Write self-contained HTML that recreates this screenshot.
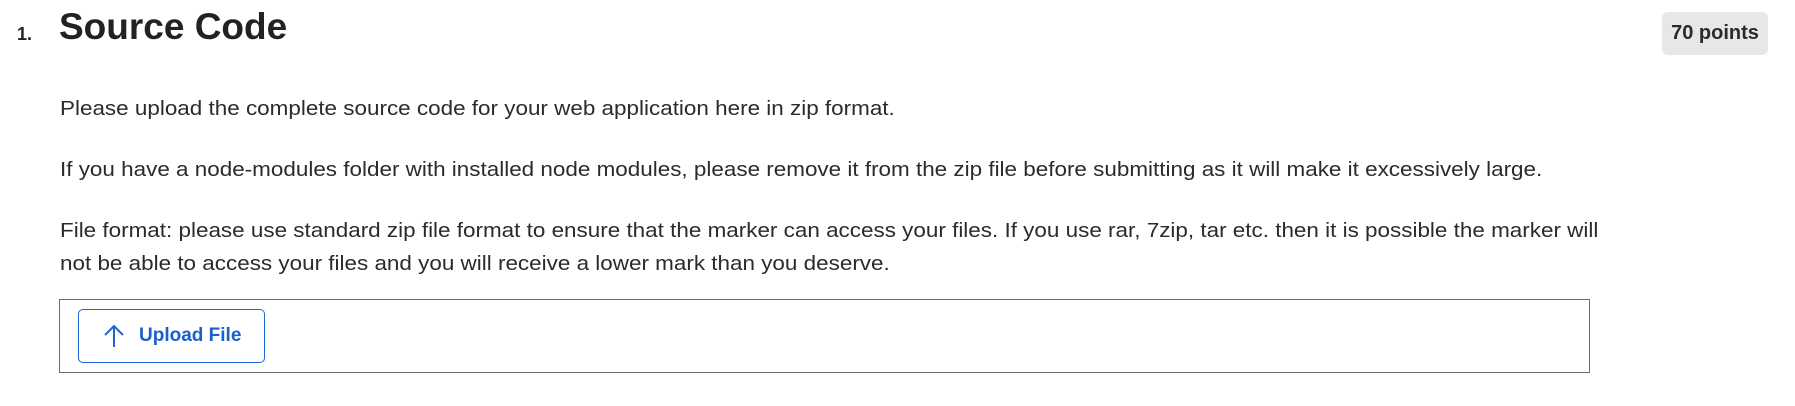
<!DOCTYPE html>
<html><head><meta charset="utf-8"><style>
body{margin:0;width:1795px;height:406px;background:#fff;position:relative;overflow:hidden;font-family:"Liberation Sans",sans-serif;color:#2d3b45}
.a{position:absolute;white-space:nowrap}
.t{font-size:20.5px;color:#2b2b2b;transform:scaleX(1.095);transform-origin:0 0}
</style></head><body>
<div class="a" style="left:17px;top:24px;font-size:18px;font-weight:bold;color:#222">1.</div>
<div class="a" style="left:59px;top:6px;font-size:37px;font-weight:bold;color:#222">Source Code</div>
<div class="a" style="left:1662px;top:12px;width:106px;height:43px;background:#e6e7e9;border-radius:6px;font-size:20px;font-weight:bold;color:#2b2b2b;line-height:43px;text-align:center">70 points</div>
<div class="a t" style="left:60px;top:97px">Please upload the complete source code for your web application here in zip format.</div>
<div class="a t" style="left:60px;top:158px">If you have a node-modules folder with installed node modules, please remove it from the zip file before submitting as it will make it excessively large.</div>
<div class="a t" style="left:60px;top:219px">File format: please use standard zip file format to ensure that the marker can access your files. If you use rar, 7zip, tar etc. then it is possible the marker will</div>
<div class="a t" style="left:60px;top:252px">not be able to access your files and you will receive a lower mark than you deserve.</div>
<div class="a" style="left:59px;top:299px;width:1529px;height:72px;border:1px solid #6b6b6b"></div>
<div class="a" style="left:78px;top:309px;width:185px;height:52px;border:1px solid #1a66d6;border-radius:5px"></div>
<svg class="a" style="left:103px;top:323px" width="22" height="26" viewBox="0 0 22 26"><path d="M11 3V24M2 12L11 3L20 12" fill="none" stroke="#1a66d6" stroke-width="2"/></svg>
<div class="a" style="left:139px;top:325px;font-size:19px;font-weight:bold;color:#1a5fcc">Upload File</div>
</body></html>
